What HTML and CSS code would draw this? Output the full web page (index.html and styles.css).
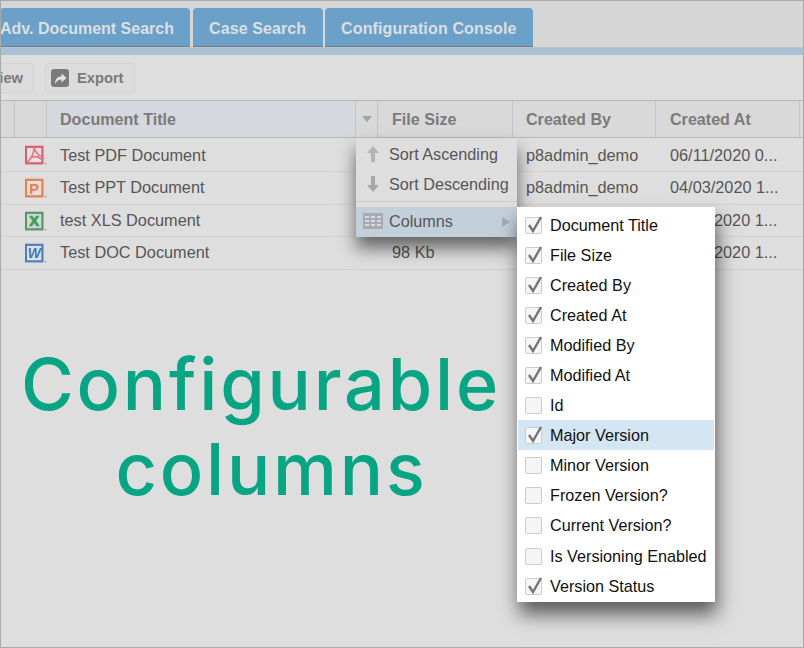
FILE: index.html
```html
<!DOCTYPE html>
<html lang="en">
  <head>
    <meta charset="UTF-8">
    <meta name="viewport" content="width=device-width, initial-scale=1.0">
    <title>Configurable columns</title>
    <link rel="stylesheet" href="styles.css">
  </head>
  <body>
    <div class="frame">
      <div class="tabs">
        <div class="tab tab-first">Adv. Document Search</div>
        <div class="tab tab-case">Case Search</div>
        <div class="tab tab-config">Configuration Console</div>
      </div>
      <div class="strip"></div>
      <div class="toolbar">
        <div class="btn btn-view">View</div>
        <div class="btn btn-export">
          <svg class="export-icon" width="18" height="18" viewBox="0 0 18 18">
            <rect width="18" height="18" rx="3" fill="#7a7a7a"/>
            <path d="M4 15c0-5 2.500-7.500 6.500-7.500V4.500l5 4.500-5 4.500v-3c-2.500 0-4.500 1-6.500 4.500z" fill="#e4e4e4"/>
          </svg>
          Export
        </div>
      </div>

      <div class="grid-row grid-head">
        <div class="cell"></div>
        <div class="cell"></div>
        <div class="cell head-title">Document Title</div>
        <div class="cell head-arrow"><span class="arrow-down"></span></div>
        <div class="cell col-wide">File Size</div>
        <div class="cell">Created By</div>
        <div class="cell col-wide">Created At</div>
        <div class="cell"></div>
      </div>

      <div class="grid-row grid-data row-1">
        <div class="cell"></div>
        <div class="cell cell-icon">
          <svg width="24" height="22" viewBox="0 0 24 22">
            <rect x="1" y="1" width="18" height="18" fill="#e6e0e1" stroke="#d95f6e" stroke-width="2.400"/>
            <path d="M10 1c0 6-2 12-8 17M6 13c4-2 9-2 13 3M10 2c1 4 4 8 9 10" fill="none" stroke="#dc7a87" stroke-width="1.800"/>
            <rect x="22" y="19" width="1" height="1" fill="#444"/>
          </svg>
        </div>
        <div class="cell span-2">Test PDF Document</div>
        <div class="cell"></div>
        <div class="cell">p8admin_demo</div>
        <div class="cell col-wide">06/11/2020 0...</div>
        <div class="cell"></div>
      </div>
      <div class="grid-row grid-data row-2">
        <div class="cell"></div>
        <div class="cell cell-icon">
          <svg width="24" height="22" viewBox="0 0 24 22">
            <rect x="1" y="1" width="18" height="18" fill="#e6ded8" stroke="#e5814f" stroke-width="2.400"/>
            <text class="icon-letter" x="10" y="16" fill="#e5814f" font-size="16">P</text>
            <rect x="22" y="19" width="1" height="1" fill="#444"/>
          </svg>
        </div>
        <div class="cell span-2">Test PPT Document</div>
        <div class="cell"></div>
        <div class="cell">p8admin_demo</div>
        <div class="cell col-wide">04/03/2020 1...</div>
        <div class="cell"></div>
      </div>
      <div class="grid-row grid-data row-3">
        <div class="cell"></div>
        <div class="cell cell-icon">
          <svg width="24" height="22" viewBox="0 0 24 22">
            <rect x="1" y="1" width="18" height="18" fill="#cddccf" stroke="#5c9468" stroke-width="2.400"/>
            <text class="icon-letter icon-heavy" x="10" y="15.500" fill="#3f9a5e" font-size="16">X</text>
            <rect x="22" y="19" width="1" height="1" fill="#444"/>
          </svg>
        </div>
        <div class="cell span-2">test XLS Document</div>
        <div class="cell"></div>
        <div class="cell"></div>
        <div class="cell cell-tail">2020 1...</div>
        <div class="cell"></div>
      </div>
      <div class="grid-row grid-data row-4">
        <div class="cell"></div>
        <div class="cell cell-icon">
          <svg width="24" height="22" viewBox="0 0 24 22">
            <rect x="1" y="1" width="18" height="18" fill="#dfe3e8" stroke="#4f81b8" stroke-width="2.400"/>
            <text class="icon-letter icon-italic" x="10" y="15.500" fill="#3f76b5" font-size="15">W</text>
            <rect x="22" y="19" width="1" height="1" fill="#444"/>
          </svg>
        </div>
        <div class="cell span-2">Test DOC Document</div>
        <div class="cell col-wide">98 Kb</div>
        <div class="cell"></div>
        <div class="cell cell-tail">2020 1...</div>
        <div class="cell"></div>
      </div>

      <h1 class="caption">Configurable<span class="caption-second">columns</span></h1>

      <div class="menu">
        <div class="menu-item">
          <svg class="menu-icon" width="16" height="18" viewBox="0 0 16 18"><path d="M8 1l6 7h-4v9H6V8H2z" fill="#b4b4b4"/></svg>
          Sort Ascending
        </div>
        <div class="menu-item">
          <svg class="menu-icon" width="16" height="18" viewBox="0 0 16 18"><path d="M8 17l6-7h-4V1H6v9H2z" fill="#a8a8a8"/></svg>
          Sort Descending
        </div>
        <div class="menu-sep"></div>
        <div class="menu-item menu-active">
          <svg class="menu-icon menu-icon-wide" width="20" height="16" viewBox="0 0 20 16">
            <rect width="20" height="16" fill="#a6abb0"/>
            <path d="M2 3h4v2H2zM2 7h4v2H2zM2 11h4v2H2zM8 3h4v2H8zM8 7h4v2H8zM8 11h4v2H8zM14 3h4v2h-4zM14 7h4v2h-4zM14 11h4v2h-4z" fill="#d4dae0"/>
          </svg>
          Columns
          <span class="arrow-right"></span>
        </div>
      </div>

      <div class="submenu">
        <div class="sub-item"><span class="box"><svg viewBox="0 0 20 20" width="20" height="20"><path d="M4 9l4 6 8-14" fill="none" stroke="#747474" stroke-width="2.400"/></svg></span>Document Title</div>
        <div class="sub-item"><span class="box"><svg viewBox="0 0 20 20" width="20" height="20"><path d="M4 9l4 6 8-14" fill="none" stroke="#747474" stroke-width="2.400"/></svg></span>File Size</div>
        <div class="sub-item"><span class="box"><svg viewBox="0 0 20 20" width="20" height="20"><path d="M4 9l4 6 8-14" fill="none" stroke="#747474" stroke-width="2.400"/></svg></span>Created By</div>
        <div class="sub-item"><span class="box"><svg viewBox="0 0 20 20" width="20" height="20"><path d="M4 9l4 6 8-14" fill="none" stroke="#747474" stroke-width="2.400"/></svg></span>Created At</div>
        <div class="sub-item"><span class="box"><svg viewBox="0 0 20 20" width="20" height="20"><path d="M4 9l4 6 8-14" fill="none" stroke="#747474" stroke-width="2.400"/></svg></span>Modified By</div>
        <div class="sub-item"><span class="box"><svg viewBox="0 0 20 20" width="20" height="20"><path d="M4 9l4 6 8-14" fill="none" stroke="#747474" stroke-width="2.400"/></svg></span>Modified At</div>
        <div class="sub-item"><span class="box"></span>Id</div>
        <div class="sub-item sub-hover"><span class="box"><svg viewBox="0 0 20 20" width="20" height="20"><path d="M4 9l4 6 8-14" fill="none" stroke="#747474" stroke-width="2.400"/></svg></span>Major Version</div>
        <div class="sub-item"><span class="box"></span>Minor Version</div>
        <div class="sub-item"><span class="box"></span>Frozen Version?</div>
        <div class="sub-item"><span class="box"></span>Current Version?</div>
        <div class="sub-item"><span class="box"></span>Is Versioning Enabled</div>
        <div class="sub-item"><span class="box"><svg viewBox="0 0 20 20" width="20" height="20"><path d="M4 9l4 6 8-14" fill="none" stroke="#747474" stroke-width="2.400"/></svg></span>Version Status</div>
      </div>
    </div>
  </body>
</html>
```

FILE: styles.css
```css
body {
  margin: 0;
  font-family: "Liberation Sans", Arial, sans-serif;
  font-size: 16px;
}
.frame {
  position: relative;
  box-sizing: border-box;
  width: 804px;
  height: 648px;
  overflow: hidden;
  background-color: #dedede;
  border: 1px solid #aaaaaa;
}

/* tabs */
.tabs {
  display: flex;
  align-items: flex-end;
  gap: 3px;
  height: 47px;
  background-color: #d6d6d6;
  border-bottom: 1px solid #bcc4cc;
  box-sizing: border-box;
}
.tab {
  display: flex;
  align-items: center;
  box-sizing: border-box;
  height: 39px;
  padding-top: 3px;
  background-color: #6ba1c8;
  border-bottom: 1px solid #6f7a84;
  border-radius: 4px 4px 0 0;
  color: #dcdfe2;
  font-weight: bold;
  white-space: nowrap;
}
.tab-first { width: 190px; margin-left: -1px; }
.tab-case { width: 130px; padding-left: 16px; letter-spacing: 0.1px; }
.tab-config { width: 208px; margin-left: -1px; padding-left: 16px; letter-spacing: 0.15px; }
.strip {
  height: 7px;
  background-color: #a9c1d6;
}

/* toolbar */
.toolbar {
  display: flex;
  align-items: center;
  gap: 11px;
  height: 45px;
  margin-left: -2px;
}
.btn {
  display: flex;
  align-items: center;
  box-sizing: border-box;
  height: 30px;
  border: 1px solid #d4d4d4;
  border-radius: 4px;
  background-color: #dcdcdc;
  color: #7a7a7a;
  font-size: 14.700px;
  font-weight: bold;
}
.btn-view {
  width: 35px;
  justify-content: flex-end;
  padding-right: 10px;
  overflow: hidden;
  white-space: nowrap;
}
.btn-export { width: 90px; padding-left: 5px; gap: 8px; }

/* grid */
.grid-row {
  display: grid;
  grid-template-columns: 12px 34px 309px 22px 135px 143px 144px 1fr;
  margin-right: -1px;
}
.grid-head {
  height: 38px;
  padding-top: 1px;
  background-color: #d9d9d9;
  border-top: 1px solid #b8b8b8;
  border-bottom: 1px solid #b8b8b8;
  box-sizing: border-box;
  color: #7b7b7b;
  font-size: 16.100px;
  font-weight: bold;
}
.cell {
  display: flex;
  align-items: center;
  box-sizing: border-box;
  min-width: 0;
  white-space: nowrap;
  overflow: hidden;
}
.grid-head .cell { border-right: 1px solid #c4c4c4; padding-left: 13px; margin-top: -1px; }
.grid-head .head-title { background-color: #d5d8de; }
.grid-head .head-arrow { padding-left: 0; justify-content: center; }
.arrow-down {
  border-left: 5px solid transparent;
  border-right: 5px solid transparent;
  border-top: 6px solid #a4a4a4;
}
.grid-data {
  border-bottom: 1px solid #d2d2d2;
  color: #565656;
  font-size: 16.300px;
  box-sizing: border-box;
}
.row-1 { height: 34px; padding-top: 2px; }
.row-2 { height: 33px; padding-bottom: 1px; }
.row-3 { height: 32px; }
.row-4 { height: 33px; padding-bottom: 1px; }
.grid-data .cell { padding-left: 13px; }
.grid-data .cell-icon { padding-left: 12px; padding-top: 2px; overflow: visible; }
.row-1 .cell-icon { padding-top: 0; }
.grid-data .span-2 { grid-column: span 2; }
.grid-data .col-wide, .grid-head .col-wide { padding-left: 14px; }
.grid-data .cell-tail { padding-left: 58px; }
.icon-letter {
  font-family: "Liberation Sans", Arial, sans-serif;
  font-weight: bold;
  text-anchor: middle;
}
.icon-heavy { stroke: #3f9a5e; stroke-width: 0.8px; }
.icon-italic { font-style: italic; }

/* caption */
.caption {
  width: 520px;
  margin: 71px 0 0 0;
  color: #07a583;
  font-family: Inter, sans-serif;
  font-size: 72px;
  font-weight: 500;
  letter-spacing: 2.800px;
  line-height: 85px;
  text-align: center;
}
.caption-second {
  display: block;
  padding-left: 21px;
}

/* menus */
.menu {
  position: absolute;
  left: 355px;
  top: 137px;
  width: 161px;
  height: 99px;
  box-sizing: border-box;
  padding-top: 1px;
  background-color: #dedede;
  box-shadow: 0 11px 16px rgba(0, 0, 0, 0.55);
  color: #565656;
  font-size: 16.200px;
}
.menu-item {
  display: flex;
  align-items: center;
  gap: 8px;
  height: 30px;
  padding-left: 9px;
  box-sizing: border-box;
}
.menu-sep {
  height: 1px;
  margin: 2px 0 5px;
  background-color: #cacaca;
}
.menu-active {
  position: relative;
  padding-bottom: 2px;
  background-color: #c3d0da;
}
.menu-icon-wide { margin-left: -2px; margin-right: -2px; }
.arrow-right {
  position: absolute;
  right: 7px;
  top: 10px;
  border-top: 5px solid transparent;
  border-bottom: 5px solid transparent;
  border-left: 8px solid #a4acb3;
}
.submenu {
  position: absolute;
  left: 516px;
  top: 206px;
  width: 198px;
  height: 395px;
  box-sizing: border-box;
  padding: 3px 1px 0;
  background-color: #ffffff;
  box-shadow: 2px 12px 18px rgba(0, 0, 0, 0.6);
  color: #111111;
  font-size: 16.200px;
}
.sub-item {
  display: flex;
  align-items: center;
  box-sizing: border-box;
  height: 30.050px;
  padding-top: 1px;
  white-space: nowrap;
}
.sub-hover { background-color: #d4e6f4; }
.box {
  position: relative;
  box-sizing: border-box;
  flex: none;
  width: 17px;
  height: 17px;
  margin: 0 8px 0 7px;
  border: 1.500px solid #cccccc;
  border-radius: 2px;
  background-color: #f5f5f5;
}
.box svg {
  position: absolute;
  left: -1px;
  top: -2px;
}
```
